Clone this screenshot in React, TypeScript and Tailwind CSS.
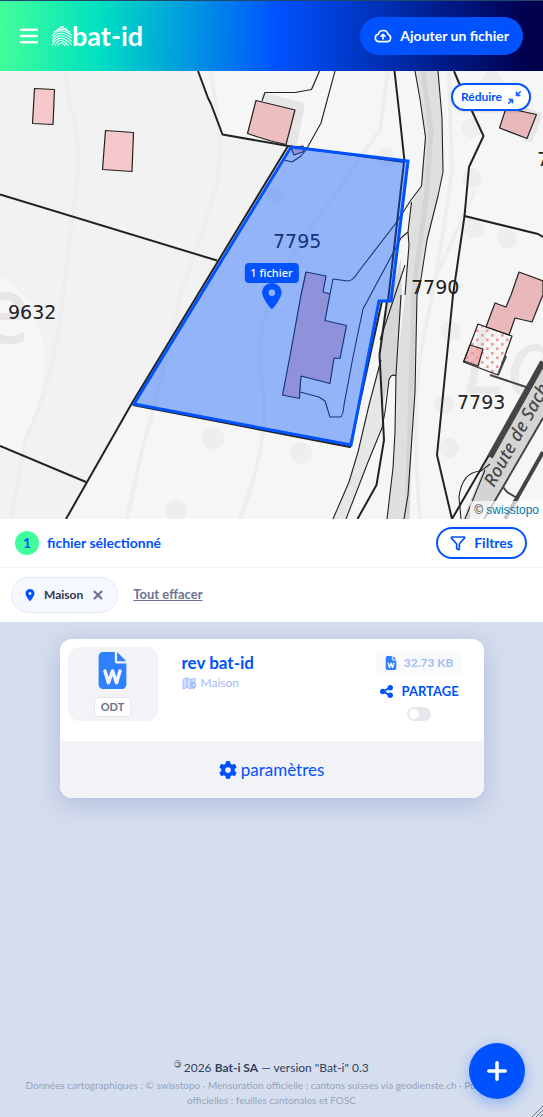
import { useState } from "react";
import { BsArrowsAngleContract } from "react-icons/bs";
import {
  FaFileWord,
  FaGear,
  FaLocationDot,
  FaShareNodes,
} from "react-icons/fa6";
import { Funnel, Plus, X } from "lucide-react";

function Logo() {
  return (
    <a href="/" className="flex items-center text-white">
      <svg
        viewBox="0 0 20 20"
        className="h-5 w-5"
        fill="none"
        stroke="currentColor"
        strokeWidth="1.05"
        strokeLinecap="round"
      >
        <path d="M8.400 0.900L10 0.300 11.600 0.900" />
        <path d="M5.200 3.400Q10 0.400 14.800 3.400" />
        <path d="M2 6Q10 0.600 18 6" />
        <path d="M0.600 9.400Q5 4 11 5Q16 6 19.400 9" />
        <path d="M0.600 12.400Q5 6.400 10.600 7.400Q15.600 8.400 19.400 12" />
        <path d="M0.600 15.400Q4.600 9 10.200 9.800Q15 10.800 19.400 15.200" />
        <path d="M0.600 18.600Q4.400 11.400 9.800 12.200Q14.200 13 19.400 18.600" />
        <path d="M3.200 19.400Q6 13.800 9.400 14.600Q13 15.600 16.200 19.400" />
        <path d="M6.200 19.400Q7.800 16.200 9.800 17Q11.600 17.800 13 19.400" />
      </svg>
      <span className="text-[27px] leading-8 font-bold">bat-id</span>
    </a>
  );
}

function MenuIcon() {
  return (
    <svg
      viewBox="0 0 18 18"
      className="h-[18px] w-[18px]"
      stroke="currentColor"
      strokeWidth="2.4"
      strokeLinecap="round"
    >
      <path d="M1.200 2.800H16.800M1.200 9H16.800M1.200 15.200H16.800" />
    </svg>
  );
}

function CloudIcon() {
  return (
    <svg
      viewBox="0 0 18 18"
      className="h-[18px] w-[18px]"
      fill="none"
      stroke="currentColor"
      strokeWidth="1.6"
      strokeLinecap="round"
      strokeLinejoin="round"
    >
      <path d="M4.600 14.600h8.600a3.600 3.600 0 0 0 1-7A5.100 5.100 0 0 0 4.300 7.200a3.750 3.750 0 0 0 .3 7.400Z" />
      <path d="M9 12V7.600M7 9.300l2-2 2 2" />
    </svg>
  );
}

function PlaceIcon() {
  return (
    <svg viewBox="0 0 15 13" className="h-[13px] w-[15px]">
      <path
        d="M1 2.500L4.800 1 9 2.500 13 1V5.500A3.200 3.200 0 0 0 8.500 9L9.500 11.500 9 11.800 4.800 10.500 1 12Z"
        fill="#d3dffc"
        stroke="#a3bbf8"
        strokeWidth="1"
        strokeLinejoin="round"
      />
      <path d="M4.800 1V10.500M9 2.500V7" stroke="#a3bbf8" strokeWidth="1.2" />
      <path
        d="M11.600 5.600A2.600 2.600 0 0 1 14.200 8.200C14.200 10 11.600 12.600 11.600 12.600S9 10 9 8.200A2.600 2.600 0 0 1 11.600 5.600Z"
        fill="#a3bbf8"
      />
      <circle cx="11.600" cy="8.200" r="0.9" fill="#fff" />
    </svg>
  );
}

function Header() {
  return (
    <header className="flex items-center justify-between border-t border-[#20486b] bg-[linear-gradient(92deg,#44ff99_0%,#00e2c0_18%,#0052ff_51%,#00004d_97%)] px-5 py-4">
      <div className="flex items-center gap-[14px]">
        <button type="button" aria-label="Menu" className="text-white">
          <MenuIcon />
        </button>
        <Logo />
      </div>
      <button
        type="button"
        className="flex h-[38px] items-center gap-2 rounded-full bg-[#0052ff] px-[14px] text-sm font-bold text-white"
      >
        <CloudIcon />
        Ajouter un fichier
      </button>
    </header>
  );
}

function ParcelMap() {
  return (
    <svg
      viewBox="0 71 543 448"
      preserveAspectRatio="xMidYMid slice"
      className="block h-[448px] w-full bg-[#f6f6f6]"
      fill="none"
      strokeLinejoin="round"
      role="img"
      aria-label="Plan cadastral"
    >
      <defs>
        <pattern id="dots" width="10" height="9" patternUnits="userSpaceOnUse">
          <rect x="1" y="1" width="2.6" height="2.6" fill="#ee9a9a" />
          <rect x="6" y="5.500" width="2.6" height="2.6" fill="#ee9a9a" />
        </pattern>
      </defs>

      {/* terrain */}
      <path d="M0 71H198L222 134 288 146 133 404 66 519H0Z" fill="#f2f2f2" />
      <path d="M0 275L30 300Q62 370 20 452L0 445Z" fill="#f6f6f6" />
      <g stroke="#eeeeee" strokeWidth="4">
        <path d="M65 71L70 105Q82 140 76 190T60 320Q50 390 25 440L11 519" />
        <path d="M210 71Q226 150 215 190T180 295Q160 390 142 450L127 519" />
        <path d="M388 71L380 130Q330 200 290 260T263 390Q270 440 240 519" />
        <path d="M449 71L452 170Q440 260 425 330T420 519" />
        <path d="M475 190L430 290" />
      </g>
      <g fill="#eeeeee">
        <circle cx="386" cy="158" r="10" />
        <circle cx="472" cy="128" r="10" />
        <circle cx="492" cy="82" r="11" />
        <circle cx="472" cy="178" r="10" />
        <circle cx="474" cy="228" r="10" />
        <circle cx="507" cy="239" r="10" />
        <circle cx="213" cy="438" r="11" />
        <circle cx="176" cy="511" r="11" />
        <circle cx="301" cy="453" r="11" />
        <circle cx="451" cy="331" r="10" />
        <circle cx="444" cy="405" r="10" />
        <circle cx="449" cy="448" r="10" />
        <circle cx="275" cy="195" r="9" />
        <path d="M261 92L305 103 296 150 285 146Z" fill="#e6e6e6" />
        <path d="M508 103L543 113 532 143 525 140Z" fill="#e6e6e6" />
      </g>
      <g fontFamily="'Noto Sans', sans-serif" fontSize="92" fill="#e6e6e6">
        <text x="-22" y="343" fontWeight="500">
          e
        </text>
        <text x="462" y="394" fill="#e9e9e9" fontStyle="italic">
          La
        </text>
      </g>

      {/* roads */}
      <path
        d="M415 71L420 99 425 137 421 186 411 203 408 232 409 245 405 295 396 375 395 432 393 468 387 519H404L408 495 415 392 417 295 427 240 438 196 443 172 442 118 438 71Z"
        fill="#dfdfdf"
      />
      <path d="M423 71L431 130 427 190 414 290 407 519" stroke="#d4d4d4" strokeWidth="5" />
      <path d="M401 258L388 302 380 355 383 405 390 376 396 375 402 300Z" fill="#d6d6d6" />
      <path d="M380 358L369 405 358 452 349 482 333 519H346L368 462 383 426Z" fill="#e6e6e6" />
      <path d="M543 358L489 455 463 519H480L503 487 543 420Z" fill="#d4d4d4" />

      {/* buildings */}
      <g stroke="#222" strokeWidth="1.2">
        <path d="M34.500 88.500L54.500 89.500 53 124.500 32.500 123.500Z" fill="#f5c8cb" />
        <path d="M105.500 130.500L133.500 132.500 132 171.500 102.500 169.500Z" fill="#f5c8cb" />
        <path d="M262 101L265 92.500H295L311.500 89.500 319.500 71" />
        <path d="M256 100.500L295 110 286 144.500 271 141 258 137 247.500 133.500Z" fill="#edbfc0" />
        <path d="M506 108L536.500 114.500 527 138.500 499.500 128Z" fill="#e8b8ba" />
        <path
          d="M519 272L543 281V295L540 302 532 322 515 318 509 335 486 327 495 303 506 307 511 295Z"
          fill="#e8b8ba"
        />
        <path d="M478 324L512 336 498 375 463.500 362Z" fill="url(#dots)" />
        <path d="M470 345L483 349 478 366 464 361Z" fill="#ee9a9a" fillOpacity="0.65" />
        <path
          d="M306 272L326 276 323 292 330 294 325 320.500 346.500 325.500 340 358.500 334 358 330 383.500 301 376 300 388 299.500 398.500 282.500 395 290 356 301 295Z"
          fill="#efbdc2"
        />
        <path d="M291 148L294 155 304 151.500 303 146Z" fill="#efbdc2" />
      </g>

      {/* thin outlines */}
      <g stroke="#222" strokeWidth="1.1">
        <path d="M335 71L321 123 306 150 301 156 292 162 284 160" />
        <path d="M415 71L420 99 425.500 137 421.500 186 411 200 396 223 359 271Q353 281 348 281L333 279 330 294" />
        <path d="M411.500 202L408 232 401 238 370 296 363 309 353 357 344 405Q343 417 340 417H330L325 401 319 397 300 392" />
        <path d="M408 232L409 245 405 295" />
        <path d="M401 295L396 375 395 432 393 468 387 519" />
        <path d="M438 71L442 118 443 172 438 196 427 240 420 285 417 295 415 392 408 495 404 519" />
        <path d="M405 265L380 340" />
        <path d="M396 376Q391 373 389 380L385 412 382 428 368 462 346 519" />
        <path d="M381 360L369 405 358 452 349 482 333 519" />
        <path d="M461 519L459 497Q462 472 481 471L490 464M465 519L485 470" />
      </g>

      {/* parcel borders */}
      <g stroke="#222" strokeWidth="2">
        <path d="M0 194.500L217 260.500" />
        <path d="M198 71L208 98 211 104 222.500 134.500 288 146" />
        <path d="M66 519L132 403 288 146 404 162 388 301 387 301 379.500 355 384 440 376.500 485 357.500 519" />
        <path d="M133 405L350 447 382 301" />
        <path d="M0 446L86 482" />
        <path d="M394.500 71L399.500 115 404.500 161" />
        <path d="M454 71L459 83 483.500 136 469 167 464.500 216 453 295 437 455 452 519 489 455" />
        <path d="M464.500 216L538 234 543 237" />
      </g>
      <g stroke="#444">
        <path d="M543 362L490 457" strokeWidth="6" />
        <path d="M543 418L503 487 484 519" strokeWidth="2" />
        <path d="M543 452L517 498 505 519" strokeWidth="4" />
        <path d="M503 487L507 492 517 498" strokeWidth="2" />
        <path d="M490 375L526 387M498 375L506 356" strokeWidth="2" />
      </g>

      {/* selected parcel */}
      <path
        d="M291 147L408 161 391 301 379 301 351 445 134 404Z"
        fill="#0052ff"
        fillOpacity="0.4"
        stroke="#0052ff"
        strokeWidth="3"
        strokeLinejoin="miter"
      />

      <g fontFamily="'DejaVu Sans', sans-serif" fontSize="19" fill="#222">
        <text x="8" y="319">9632</text>
        <text x="273" y="248" fill="#16347a">
          7795
        </text>
        <text x="411" y="294">7790</text>
        <text x="457" y="409">7793</text>
        <text x="537" y="166">7</text>
      </g>
      <text
        transform="translate(494 488) rotate(-61)"
        fontFamily="'Noto Sans', sans-serif"
        fontSize="18"
        fontStyle="italic"
        fontWeight="500"
        fill="#4a4a4a"
      >
        Route de Sach
      </text>
    </svg>
  );
}

function MapPanel() {
  return (
    <section className="relative">
      <ParcelMap />
      <button
        type="button"
        className="absolute top-3 right-3 flex h-7 items-center gap-1.5 rounded-full border-2 border-[#0052ff] bg-white px-2 text-xs font-bold text-[#0052ff] shadow"
      >
        Réduire
        <BsArrowsAngleContract size={13} strokeWidth={1} />
      </button>
      <div className="absolute top-48 left-1/2 flex -translate-x-1/2 flex-col items-center">
        <span className="rounded bg-[#0052ff] px-1.5 py-0.5 text-[11px] leading-4 font-medium text-white font-['Noto_Sans',sans-serif]">
          1 fichier
        </span>
        <FaLocationDot size={26} className="text-[#0052ff]" />
      </div>
      <p className="absolute right-0 bottom-0 bg-white/70 px-1 text-xs leading-[18px] text-[#333] font-['Liberation_Sans',sans-serif]">
        ©{" "}
        <a href="#swisstopo" className="text-[#0078a8]">
          swisstopo
        </a>
      </p>
    </section>
  );
}

function FilterBar() {
  const [place, setPlace] = useState<string | null>("Maison");

  return (
    <section className="bg-white">
      <div className="flex h-[49px] items-center justify-between border-b border-gray-100 pr-4 pl-[15px]">
        <div className="flex items-center gap-2 text-sm font-bold text-[#0052ff]">
          <span className="flex h-6 w-6 items-center justify-center rounded-full bg-[#40ff9b]">
            1
          </span>
          fichier sélectionné
        </div>
        <button
          type="button"
          className="flex h-8 items-center gap-2 rounded-full border-2 border-[#0052ff] px-3 text-sm font-bold text-[#0052ff]"
        >
          <Funnel size={16} strokeWidth={2.5} />
          Filtres
        </button>
      </div>
      <div className="flex h-[54px] items-center gap-[15px] px-[11px]">
        {place && (
          <div className="flex h-9 items-center gap-2 rounded-full border border-[#e3e8f6] bg-[#f5f8ff] px-3 text-xs font-bold text-[#33334d]">
            <FaLocationDot size={12} className="text-[#0052ff]" />
            {place}
            <button
              type="button"
              aria-label="Retirer"
              className="text-[#6b7391]"
              onClick={() => setPlace(null)}
            >
              <X size={14} strokeWidth={3.5} />
            </button>
          </div>
        )}
        <button
          type="button"
          className="text-[13px] font-bold text-[#6b7391] underline"
          onClick={() => setPlace(null)}
        >
          Tout effacer
        </button>
      </div>
    </section>
  );
}

function FileCard() {
  const [shared, setShared] = useState(false);

  return (
    <article className="mx-auto w-full max-w-[424px] overflow-hidden rounded-xl bg-white shadow-[0_6px_24px_rgba(60,80,160,0.25)]">
      <div className="flex items-start px-2 pt-2 pb-5">
        <div className="flex h-[74px] w-[90px] flex-col items-center justify-between rounded-xl bg-[#f1f3f7] pt-[5px] pb-1">
          <FaFileWord size={37} className="text-[#2f80ff]" />
          <span className="rounded border border-gray-200 bg-white px-1.5 text-[11px] leading-[18px] font-bold text-gray-500">
            ODT
          </span>
        </div>
        <div className="ml-6 flex-1 pt-1 text-[#0052ff]">
          <h2 className="text-[17px] leading-6 font-bold">rev bat-id</h2>
          <p className="flex items-center gap-1 text-xs leading-4 text-[#a3bbf8]">
            <PlaceIcon />
            Maison
          </p>
        </div>
        <div className="mr-[14px] flex flex-col items-center">
          <span className="mt-1 flex h-6 items-center gap-1.5 rounded bg-gray-50 px-2 text-xs font-bold text-[#a3bbf8]">
            <FaFileWord size={14} className="text-[#2f80ff]" />
            32.73 KB
          </span>
          <label className="mt-2 flex flex-col items-center gap-1 text-[#0052ff]">
            <span className="flex items-center gap-2 text-[13px] leading-4 font-bold">
              <FaShareNodes size={15} />
              PARTAGE
            </span>
            <input
              type="checkbox"
              checked={shared}
              onChange={(e) => setShared(e.target.checked)}
              className="mt-1 h-[14px] w-6 appearance-none rounded-full bg-gray-200 p-0.5 before:block before:h-2.5 before:w-2.5 before:rounded-full before:bg-white checked:bg-[#0052ff] checked:before:ml-auto"
            />
          </label>
        </div>
      </div>
      <button
        type="button"
        className="flex h-[57px] w-full items-center justify-center gap-1 bg-[#f1f3f7] text-[17px] text-[#0052ff]"
      >
        <FaGear size={18} />
        paramètres
      </button>
    </article>
  );
}

function Footer() {
  return (
    <footer className="mt-auto px-6 pb-[9px] text-center">
      <p className="text-xs leading-5 text-[#33415f]">
        <sup className="mr-0.5 inline-block -scale-x-100">©</sup>
        2026 <b>Bat-i SA</b> — version "Bat-i" 0.3
      </p>
      <p className="text-[10px] leading-[15px] text-[#97a3bb]">
        Données cartographiques : © swisstopo · Mensuration officielle : cantons
        suisses via geodienste.ch · Publications officielles : feuilles
        cantonales et FOSC
      </p>
    </footer>
  );
}

export default function App() {
  return (
    <div className="flex min-h-screen flex-col bg-[#d5deee] font-['Lato',sans-serif]">
      <Header />
      <MapPanel />
      <FilterBar />
      <main className="px-4 pt-[17px] pb-8">
        <FileCard />
      </main>
      <Footer />
      <button
        type="button"
        aria-label="Ajouter"
        className="fixed right-[18px] bottom-[18px] flex h-14 w-14 items-center justify-center rounded-full bg-[#0052ff] text-white shadow-[0_4px_14px_rgba(0,82,255,0.35)]"
      >
        <Plus size={28} strokeWidth={3} />
      </button>
      <svg
        viewBox="0 0 12 12"
        className="fixed right-0 bottom-0 h-3 w-3"
        stroke="#777"
        strokeWidth="1"
      >
        <path d="M1 12L12 1M5 12L12 5M9 12L12 9" />
      </svg>
    </div>
  );
}
